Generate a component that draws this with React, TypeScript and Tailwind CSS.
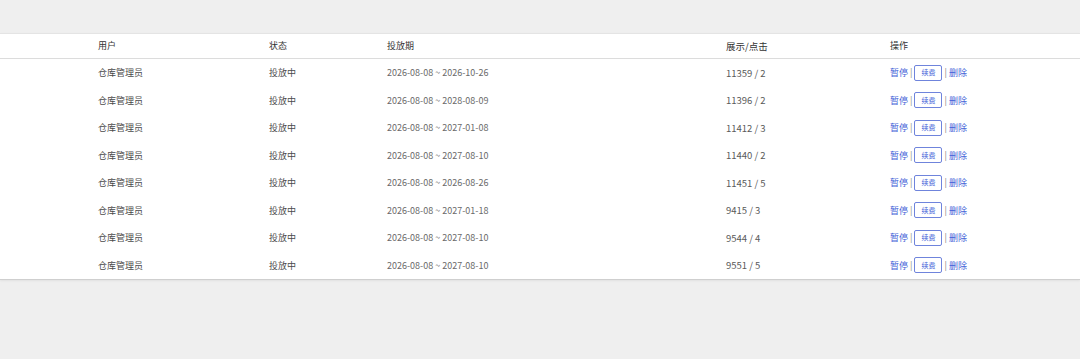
import React from 'react';

interface Ad {
  user: string;
  status: string;
  start: string;
  end: string;
  views: number;
  clicks: number;
}

const ads: Ad[] = [
  { user: '仓库管理员', status: '投放中', start: '2026-08-08', end: '2026-10-26', views: 11359, clicks: 2 },
  { user: '仓库管理员', status: '投放中', start: '2026-08-08', end: '2028-08-09', views: 11396, clicks: 2 },
  { user: '仓库管理员', status: '投放中', start: '2026-08-08', end: '2027-01-08', views: 11412, clicks: 3 },
  { user: '仓库管理员', status: '投放中', start: '2026-08-08', end: '2027-08-10', views: 11440, clicks: 2 },
  { user: '仓库管理员', status: '投放中', start: '2026-08-08', end: '2026-08-26', views: 11451, clicks: 5 },
  { user: '仓库管理员', status: '投放中', start: '2026-08-08', end: '2027-01-18', views: 9415, clicks: 3 },
  { user: '仓库管理员', status: '投放中', start: '2026-08-08', end: '2027-08-10', views: 9544, clicks: 4 },
  { user: '仓库管理员', status: '投放中', start: '2026-08-08', end: '2027-08-10', views: 9551, clicks: 5 },
];

const cols = 'grid grid-cols-[171px_118px_339px_164px_1fr] pl-[98px] items-center';

export default function App() {
  return (
    <div
      className="w-[1080px] h-[359px] bg-[#efefef] pt-[33px]"
      style={{ fontFamily: '"Noto Sans CJK SC", "Noto Sans", sans-serif' }}
    >
      <div className="bg-white border-t border-[#e4e4e4] border-b border-b-[#cfcfcf] shadow-[0_1px_2px_rgba(0,0,0,0.06)]">
        <div className={`${cols} h-[25px] border-b border-[#dcdcdc] text-[9px] text-[#333]`}>
          <div>用户</div>
          <div>状态</div>
          <div>投放期</div>
          <div className="text-[9.5px]">展示/点击</div>
          <div>操作</div>
        </div>
        {ads.map((a, i) => (
          <div key={i} className={`${cols} h-[27.5px] text-[9px] text-[#4a4a4a]`}>
            <div>{a.user}</div>
            <div>{a.status}</div>
            <div className="text-[9px] text-[#6a6a6a]">
              {a.start} ~ {a.end}
            </div>
            <div className="text-[9.5px] text-[#5a5a5a]">
              {a.views} / {a.clicks}
            </div>
            <div className="flex items-center text-[9px] text-[#4361d8]">
              <span>暂停</span>
              <span className="text-[#888] mx-[2px]">|</span>
              <button className="h-[16px] w-[28px] border border-[#6f84dc] rounded-[2px] bg-white text-[7px] text-[#4361d8] leading-none">
                续费
              </button>
              <span className="text-[#888] mx-[2px]">|</span>
              <span>删除</span>
            </div>
          </div>
        ))}
      </div>
    </div>
  );
}
